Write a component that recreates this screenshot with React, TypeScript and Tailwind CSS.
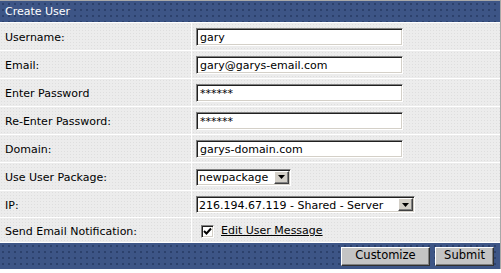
import React from "react";

const rowBg =
  "bg-[#ececec] bg-[radial-gradient(circle,#dedede_0.6px,transparent_0.8px)] bg-[length:3px_3px]";
const blueBg =
  "bg-[#3d5586] bg-[radial-gradient(circle,#2c416c_0.8px,transparent_1px)] bg-[length:6px_6px]";

function TextBox({ value, width = "w-[207px]" }: { value: string; width?: string }) {
  return (
    <div
      className={`${width} h-[18px] bg-white border border-t-[#808080] border-l-[#808080] border-r-white border-b-white shadow-[inset_1px_1px_0_#202020,inset_-1px_-1px_0_#d4d0c8] flex items-center pl-[3px] pt-[1px] text-black leading-none`}
    >
      {value}
    </div>
  );
}

function Arrow() {
  return (
    <div className="w-[15px] h-[13px] mr-[1px] bg-[#d4d0c8] border border-t-white border-l-white border-r-[#404040] border-b-[#404040] shadow-[inset_-1px_-1px_0_#808080] flex items-center justify-center">
      <svg width="7" height="4" viewBox="0 0 7 4">
        <polygon points="0,0 7,0 3.5,4" fill="#000" />
      </svg>
    </div>
  );
}

function SelectBox({ value, width }: { value: string; width: string }) {
  return (
    <div
      className={`${width} h-[17px] bg-white border border-t-[#808080] border-l-[#808080] border-r-white border-b-white shadow-[inset_1px_1px_0_#202020,inset_-1px_-1px_0_#d4d0c8] flex items-center justify-between pl-[2px] text-black leading-none`}
    >
      <span className="whitespace-nowrap pt-[1px]">{value}</span>
      <Arrow />
    </div>
  );
}

function Row({ label, h, children }: { label: string; h: string; children: React.ReactNode }) {
  return (
    <div className={`flex ${h} gap-px`}>
      <div className={`w-[191px] ${rowBg} flex items-center pl-[5px] pt-[4px] text-black`}>{label}</div>
      <div className={`flex-1 ${rowBg} flex items-center pl-[4px] pt-[1px]`}>{children}</div>
    </div>
  );
}

function Button({ label, width }: { label: string; width: string }) {
  return (
    <div
      className={`${width} h-[19px] bg-[#c4c4c4] border border-t-white border-l-white border-r-[#303030] border-b-[#303030] shadow-[inset_-1px_-1px_0_#808080] flex items-center justify-center text-black leading-none text-[11.5px]`}
    >
      {label}
    </div>
  );
}

export default function App() {
  return (
    <div className="w-[501px] h-[273px] bg-white font-['DejaVu_Sans','Verdana',sans-serif] text-[11px] overflow-hidden">
      <div className="border-t border-r border-[#a8a8a8] bg-white flex flex-col gap-px">
        <div className={`h-[21px] ${blueBg} flex items-center pl-[5px] pt-[1px] text-white`}>Create User</div>
        <Row label="Username:" h="h-[27px]">
          <TextBox value="gary" />
        </Row>
        <Row label="Email:" h="h-[27px]">
          <TextBox value="gary@garys-email.com" />
        </Row>
        <Row label="Enter Password" h="h-[27px]">
          <TextBox value="******" />
        </Row>
        <Row label="Re-Enter Password:" h="h-[27px]">
          <TextBox value="******" />
        </Row>
        <Row label="Domain:" h="h-[27px]">
          <TextBox value="garys-domain.com" />
        </Row>
        <Row label="Use User Package:" h="h-[27px]">
          <SelectBox value="newpackage" width="w-[95px]" />
        </Row>
        <Row label="IP:" h="h-[26px]">
          <SelectBox value="216.194.67.119 - Shared - Server" width="w-[219px]" />
        </Row>
        <Row label="Send Email Notification:" h="h-[24px]">
          <div className="flex items-center pl-[5px] pt-[2px]">
            <div className="w-[13px] h-[13px] bg-white border border-t-[#808080] border-l-[#808080] border-r-white border-b-white shadow-[inset_1px_1px_0_#202020,inset_-1px_-1px_0_#d4d0c8] flex items-center justify-center">
              <svg width="9" height="9" viewBox="0 0 9 9">
                <polyline points="1,4 3.5,6.5 8,1.5" fill="none" stroke="#000" strokeWidth="2" />
              </svg>
            </div>
            <span className="ml-[7px] underline text-black">Edit User Message</span>
          </div>
        </Row>
        <div className={`h-[26px] ${blueBg} flex items-center justify-end gap-[5px] pr-[6px]`}>
          <Button label="Customize" width="w-[89px]" />
          <Button label="Submit" width="w-[59px]" />
        </div>
      </div>
    </div>
  );
}
